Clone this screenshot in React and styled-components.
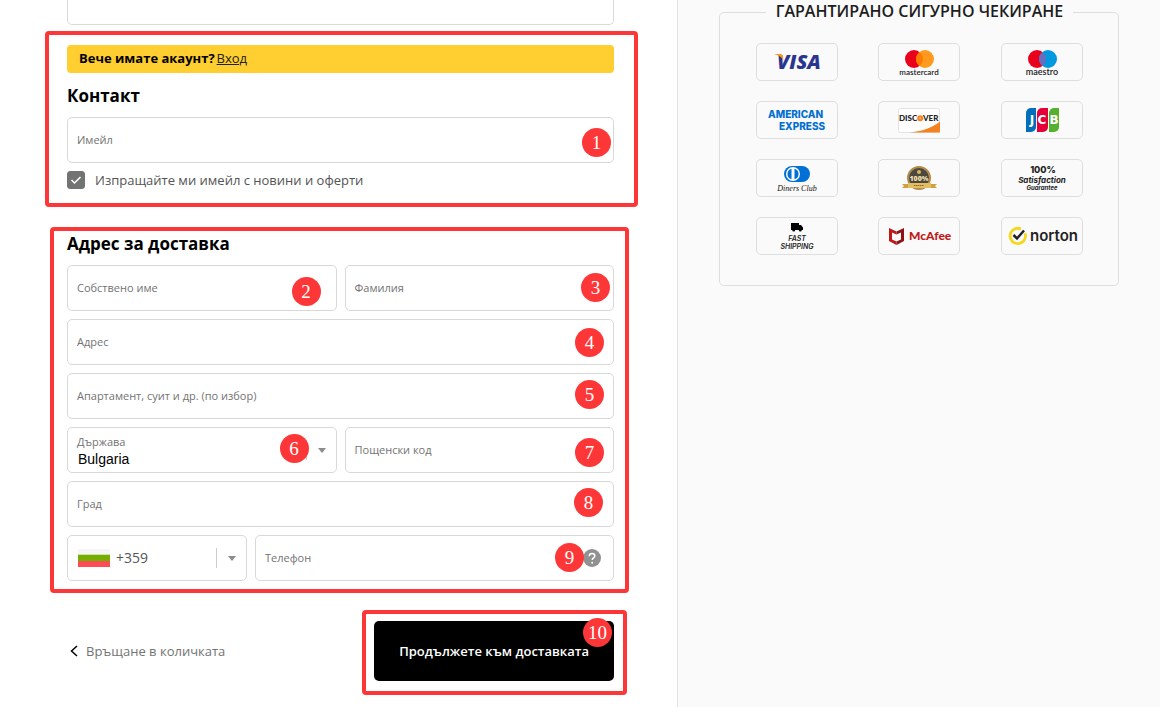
import React, { useState } from "react";
import styled, { createGlobalStyle } from "styled-components";

const GlobalStyle = createGlobalStyle`
  *, *::before, *::after {
    box-sizing: border-box;
  }
  body {
    margin: 0;
    color: #000;
    background-color: #fff;
    font-family: "Open Sans", "Noto Sans", sans-serif;
    font-size: 13px;
    line-height: 20px;
  }
`;

const Page = styled.div`
  display: grid;
  grid-template-columns: minmax(0, 1fr) 482px;
  min-height: 100vh;
`;

const Main = styled.main`
  display: flex;
  flex-direction: column;
  padding: 0 63px 0 67px;
  border-right: 1px solid #e1e1e1;
`;

const Aside = styled.aside`
  padding: 0 41px;
  background-color: #fafafa;
`;

const ExpressBox = styled.div`
  height: 25px;
  border: 1px solid #d9d9d9;
  border-top: 0;
  border-radius: 0 0 5px 5px;
`;

const Section = styled.section`
  position: relative;
  display: flex;
  flex-direction: column;
  margin-top: ${(props) => props.$top};
`;

const Frame = styled.div`
  position: absolute;
  inset: ${(props) => props.$inset};
  border: 4px solid #fd3737;
  border-radius: 4px;
  pointer-events: none;
`;

const Mark = styled.span`
  position: absolute;
  top: ${(props) => props.$top};
  right: ${(props) => props.$right};
  width: 29px;
  height: 29px;
  border-radius: 50%;
  background-color: #fd3737;
  color: #fff;
  font: 19px/29px "Liberation Serif", serif;
  text-align: center;
  pointer-events: none;
`;

const Banner = styled.p`
  display: flex;
  gap: 2px;
  margin: 0;
  padding: 3px 12px 5px;
  border-radius: 4px;
  background-color: #ffce30;

  a {
    color: #222;
  }
`;

const Title = styled.h2`
  margin: 11px 0 9px;
  font-size: 17px;
  font-weight: 700;
  line-height: 24px;
`;

const Fields = styled.div`
  display: grid;
  gap: 8px;
`;

const Row = styled.div`
  display: grid;
  grid-template-columns: ${(props) => props.$columns || "1fr 1fr"};
  gap: 8px;
`;

const FieldBox = styled.div`
  position: relative;
  display: grid;
  align-items: center;
  height: 46px;
  border: 1px solid #d9d9d9;
  border-radius: 5px;
  background-color: #fff;

  & > label,
  & > input,
  & > select {
    grid-area: 1 / 1;
  }
`;

const Label = styled.label`
  padding: 0 9px;
  color: #737373;
  font-size: 11px;
  line-height: 16px;
  align-self: ${(props) => (props.$raised ? "start" : "center")};
  margin-top: ${(props) => (props.$raised ? "6px" : "0")};
  z-index: 1;
  pointer-events: none;
`;

const Input = styled.input`
  width: 100%;
  height: 100%;
  padding: 0 9px;
  border: 0;
  border-radius: 5px;
  background: transparent;
  font: inherit;
`;

const Select = styled.select`
  width: 100%;
  height: 100%;
  padding: 17px 10px 0;
  border: 0;
  border-radius: 5px;
  background: transparent;
  color: #000;
  font: 14px "Liberation Sans", Arial, sans-serif;
  appearance: none;
`;

const CodeSelect = styled(Select)`
  padding: 0 10px 0 48px;
  color: #555;
  font: inherit;
  font-size: 14px;
`;

const Indicator = styled.span`
  grid-area: 1 / 1;
  justify-self: end;
  display: flex;
  align-items: center;
  gap: 11px;
  margin-right: 10px;
  pointer-events: none;

  &::before {
    content: "";
    width: 1px;
    height: 20px;
    background-color: #ccc;
  }
`;

const FlagIcon = styled.svg`
  grid-area: 1 / 1;
  margin-left: 10px;
  pointer-events: none;
`;

const HelpButton = styled.button`
  grid-area: 1 / 1;
  justify-self: end;
  display: flex;
  margin-right: 12px;
  padding: 0;
  border: 0;
  background: none;
`;

const CheckRow = styled.label`
  display: flex;
  align-items: center;
  gap: 10px;
  margin-top: 7px;
  color: #545454;
`;

const Checkbox = styled.input`
  appearance: none;
  width: 18px;
  height: 18px;
  margin: 0;
  border: 1px solid #737373;
  border-radius: 3px;

  &:checked {
    background: #737373;
  }
`;

const CheckHolder = styled.span`
  display: grid;

  & > * {
    grid-area: 1 / 1;
  }

  svg {
    pointer-events: none;
  }
`;

const Actions = styled.div`
  display: flex;
  justify-content: space-between;
  align-items: center;
  margin-top: 40px;
`;

const BackLink = styled.a`
  display: flex;
  align-items: center;
  gap: 7px;
  padding-left: 2px;
  color: #737373;
  text-decoration: none;
`;

const SubmitWrap = styled.div`
  position: relative;
`;

const SubmitButton = styled.button`
  height: 60px;
  padding: 0 25px;
  border: 0;
  border-radius: 5px;
  background-color: #000;
  color: #fff;
  font: inherit;
  font-weight: 600;
`;

const Guarantee = styled.fieldset`
  min-width: 0;
  margin: 0;
  padding: 19px 15px 30px 16px;
  border: 1px solid #dedede;
  border-radius: 5px;
`;

const Legend = styled.legend`
  margin: 0 auto;
  padding: 0 10px 2px;
  color: #1d1d1d;
  font-size: 16px;
  font-weight: 600;
  line-height: 22px;
`;

const Badges = styled.ul`
  display: grid;
  grid-template-columns: repeat(3, 1fr);
  justify-items: center;
  gap: 20px 0;
  margin: 0;
  padding: 0;
  list-style: none;
`;

const Badge = styled.li`
  display: flex;
  width: 82px;
  height: 38px;
  border: 1px solid #dedede;
  border-radius: 5px;
`;

const Arrow = () => (
  <svg width="8" height="5" viewBox="0 0 8 5">
    <path d="M0 0h8L4 5z" fill="#8c8c8c" />
  </svg>
);

const Flag = () => (
  <FlagIcon width="32" height="20" viewBox="0 0 32 20">
    <path d="M0 1h32v5H0z" fill="#f5f5f5" />
    <path d="M0 6h32v1H0z" fill="#cfe3a6" />
    <path d="M0 7h32v6H0z" fill="#73af00" />
    <path d="M0 13h32v6H0z" fill="#ff4b55" />
  </FlagIcon>
);

const Visa = () => (
  <>
    <text x="20" y="25" fontFamily="Open Sans" fontSize="20" fontWeight="800" fontStyle="italic" fill="#2a3590">
      VISA
    </text>
    <path d="M17 10h6c2 0 3 1 3.500 6-2-3-5-5-9.500-6z" fill="#f7981d" />
  </>
);

const Circles = ({ right, middle, name, size }) => (
  <>
    <circle cx="35" cy="15" r="9" fill="#eb001b" />
    <circle cx="46" cy="15" r="9" fill={right} />
    <path d="M40.500 7.900a9 9 0 0 1 0 14.200a9 9 0 0 1 0-14.200z" fill={middle} />
    <text x="40" y="31" textAnchor="middle" fontFamily="Lato" fontSize={size} fontWeight="600" fill="#222">
      {name}
    </text>
  </>
);

const Amex = () => (
  <g fontFamily="Inter" fontSize="10" fontWeight="800" fill="#016fd0">
    <text x="11" y="16">AMERICAN</text>
    <text x="22" y="28">EXPRESS</text>
  </g>
);

const Discover = () => (
  <>
    <rect x="19.500" y="6.500" width="41" height="24" rx="2" fill="#fff" stroke="#e3e3e3" />
    <path d="M30 30.500c12-1 22-4 31-11v11z" fill="#f58220" />
    <g fontFamily="Lato" fontSize="8" fontWeight="900" fill="#222">
      <text x="20" y="19">DISC</text>
      <text x="44" y="19">VER</text>
    </g>
    <circle cx="41.200" cy="16.200" r="3" fill="#f58220" />
    <circle cx="41.200" cy="16.200" r="1" fill="#fbc08c" />
  </>
);

const Jcb = () => (
  <>
    <path d="M29 6h5v19a5 5 0 0 1-5 5h-5V11a5 5 0 0 1 5-5z" fill="#006ebc" />
    <path d="M40 6h6v19a5 5 0 0 1-5 5h-6V11a5 5 0 0 1 5-5z" fill="#e6003a" />
    <path d="M52 6h5v19a5 5 0 0 1-5 5h-5V11a5 5 0 0 1 5-5z" fill="#55b02f" />
    <g fontFamily="DejaVu Sans" fontSize="12" fontWeight="700" fill="#fff" textAnchor="middle">
      <text x="30" y="22">J</text>
      <text x="40" y="22">C</text>
      <text x="52" y="22">B</text>
    </g>
  </>
);

const Diners = () => (
  <>
    <rect x="27" y="6" width="26" height="16" rx="8" fill="#006fd6" />
    <circle cx="36" cy="14" r="7" fill="#fff" />
    <path d="M34.500 8.700a5.500 5.500 0 0 0 0 10.600zM37.500 8.700a5.500 5.500 0 0 1 0 10.600z" fill="#006fd6" />
    <text x="40" y="31" textAnchor="middle" fontFamily="Liberation Serif" fontSize="8" fontStyle="italic" fill="#111">
      Diners Club
    </text>
  </>
);

const Seal = () => (
  <>
    <circle cx="40" cy="18" r="11" fill="#4b4840" stroke="#b38b4d" strokeWidth="2" />
    <circle cx="40" cy="12" r="2" fill="#d9b35c" />
    <text x="40" y="21" textAnchor="middle" fontFamily="Open Sans" fontSize="7" fontWeight="800" fill="#f0dfa8">
      100%
    </text>
    <path d="M23 24h35l-2 2 2 2H23l2-2z" fill="#cda144" />
    <path d="M29 23h23v5H29z" fill="#e3bd62" />
    <path d="M35 25.500h10" stroke="#8a6a28" strokeDasharray="1.500 .5" />
  </>
);

const Satisfaction = () => (
  <g textAnchor="middle" fontFamily="Inter" fill="#222">
    <text x="41" y="13" fontSize="9" fontWeight="800">100%</text>
    <g fontStyle="italic" fontWeight="700">
      <text x="40" y="23" fontSize="8">Satisfaction</text>
      <text x="40" y="30" fontSize="6">Guarantee</text>
    </g>
  </g>
);

const Shipping = () => (
  <>
    <path d="M34 5h8v2h2l2 2.500V12h-1.200a1.500 1.500 0 0 1-3 0h-3.600a1.500 1.500 0 0 1-3 0H34z" fill="#000" />
    <g textAnchor="middle" fontFamily="Inter" fontSize="7" fontWeight="600" fontStyle="italic" fill="#222">
      <text x="40" y="23">FAST</text>
      <text x="40" y="31">SHIPPING</text>
    </g>
  </>
);

const McAfee = () => (
  <>
    <path d="M10 10l7.500 3.500v3L13 14.500v7l4.500 2V27L10 23z" fill="#c01818" />
    <path d="M25 10l-7.500 3.500v3L22 14.500v7l-4.500 2V27L25 23z" fill="#8f1416" />
    <text x="30" y="22" fontFamily="Lato" fontSize="12" fontWeight="900" fill="#c01818">
      McAfee
    </text>
  </>
);

const Norton = () => (
  <>
    <path d="M19 11a7.700 7.700 0 1 0 4 4.300" fill="none" stroke="#f2d91f" strokeWidth="2.800" />
    <path d="M11.500 17l3.500 3.500 7-8" fill="none" stroke="#222" strokeWidth="2.500" />
    <text x="28" y="23" fontFamily="Inter" fontSize="15" fontWeight="600" fill="#222">
      norton
    </text>
  </>
);

const badges = [
  { name: "Visa", art: <Visa /> },
  { name: "Mastercard", art: <Circles right="#ff9a1f" middle="#ff7a00" name="mastercard" size="8" /> },
  { name: "Maestro", art: <Circles right="#0099df" middle="#6c6bbd" name="maestro" size="9" /> },
  { name: "American Express", art: <Amex /> },
  { name: "Discover", art: <Discover /> },
  { name: "JCB", art: <Jcb /> },
  { name: "Diners Club", art: <Diners /> },
  { name: "100%", art: <Seal /> },
  { name: "Satisfaction", art: <Satisfaction /> },
  { name: "Fast shipping", art: <Shipping /> },
  { name: "McAfee", art: <McAfee /> },
  { name: "Norton", art: <Norton /> },
];

function TextField({ id, label, type = "text", mark, top, right, children }) {
  return (
    <FieldBox>
      <Label htmlFor={id}>{label}</Label>
      <Input id={id} type={type} />
      {children}
      <Mark $top={top} $right={right}>
        {mark}
      </Mark>
    </FieldBox>
  );
}

export default function App() {
  const [news, setNews] = useState(true);

  return (
    <>
      <GlobalStyle />
      <Page>
        <Main>
          <ExpressBox />
          <Section $top="20px">
            <Banner>
              <strong>Вече имате акаунт?</strong>
              <a href="#login">Вход</a>
            </Banner>
            <Title>Контакт</Title>
            <TextField id="email" type="email" label="Имейл" mark="1" top="10px" right="2px" />
            <CheckRow>
              <CheckHolder>
                <Checkbox
                  type="checkbox"
                  checked={news}
                  onChange={(e) => setNews(e.target.checked)}
                />
                <svg width="18" height="18" viewBox="0 0 18 18">
                  <path d="M4.500 9l3 3 6-6" fill="none" stroke="#fff" strokeWidth="1.500" />
                </svg>
              </CheckHolder>
              Изпращайте ми имейл с новини и оферти
            </CheckRow>
            <Frame $inset="-14px -24px -17px -22px" />
          </Section>

          <Section $top="31px">
            <Title>Адрес за доставка</Title>
            <Fields>
              <Row>
                <TextField id="first" label="Собствено име" mark="2" top="11px" right="15px" />
                <TextField id="last" label="Фамилия" mark="3" top="7px" right="3px" />
              </Row>
              <TextField id="address" label="Адрес" mark="4" top="8px" right="9px" />
              <TextField id="flat" label="Апартамент, суит и др. (по избор)" mark="5" top="6px" right="9px" />
              <Row>
                <FieldBox>
                  <Label htmlFor="country" $raised>
                    Държава
                  </Label>
                  <Select id="country" defaultValue="BG">
                    <option value="BG">Bulgaria</option>
                  </Select>
                  <Indicator>
                    <Arrow />
                  </Indicator>
                  <Mark $top="6px" $right="27px">
                    6
                  </Mark>
                </FieldBox>
                <TextField id="zip" label="Пощенски код" mark="7" top="10px" right="9px" />
              </Row>
              <TextField id="city" label="Град" mark="8" top="6px" right="10px" />
              <Row $columns="180px 1fr">
                <FieldBox>
                  <CodeSelect aria-label="Код" defaultValue="359">
                    <option value="359">+359</option>
                  </CodeSelect>
                  <Flag />
                  <Indicator>
                    <Arrow />
                  </Indicator>
                </FieldBox>
                <TextField id="phone" type="tel" label="Телефон" mark="9" top="7px" right="29px">
                  <HelpButton type="button" aria-label="Помощ">
                    <svg width="18" height="18" viewBox="0 0 18 18">
                      <circle cx="9" cy="9" r="9" fill="#919191" />
                      <path
                        d="M6.300 7.200c0-1.600 1.100-2.700 2.800-2.700 1.600 0 2.700 1 2.700 2.400 0 2-2.600 2.100-2.600 4.200"
                        fill="none"
                        stroke="#fff"
                        strokeWidth="1.500"
                      />
                      <circle cx="9.200" cy="13.700" r="1" fill="#fff" />
                    </svg>
                  </HelpButton>
                </TextField>
              </Row>
            </Fields>
            <Frame $inset="6px -15px -12px -17px" />
          </Section>

          <Actions>
            <BackLink href="#cart">
              <svg width="10" height="12" viewBox="0 0 10 12">
                <path d="M8 1L2.500 6 8 11" fill="none" stroke="#000" strokeWidth="1.500" />
              </svg>
              Връщане в количката
            </BackLink>
            <SubmitWrap>
              <SubmitButton type="submit">Продължете към доставката</SubmitButton>
              <Frame $inset="-11px -13px -14px -12px" />
              <Mark $top="-3px" $right="2px">
                10
              </Mark>
            </SubmitWrap>
          </Actions>
        </Main>

        <Aside>
          <Guarantee>
            <Legend>ГАРАНТИРАНО СИГУРНО ЧЕКИРАНЕ</Legend>
            <Badges>
              {badges.map((badge) => (
                <Badge key={badge.name}>
                  <svg width="80" height="36" viewBox="0 0 80 36">
                    {badge.art}
                  </svg>
                </Badge>
              ))}
            </Badges>
          </Guarantee>
        </Aside>
      </Page>
    </>
  );
}
